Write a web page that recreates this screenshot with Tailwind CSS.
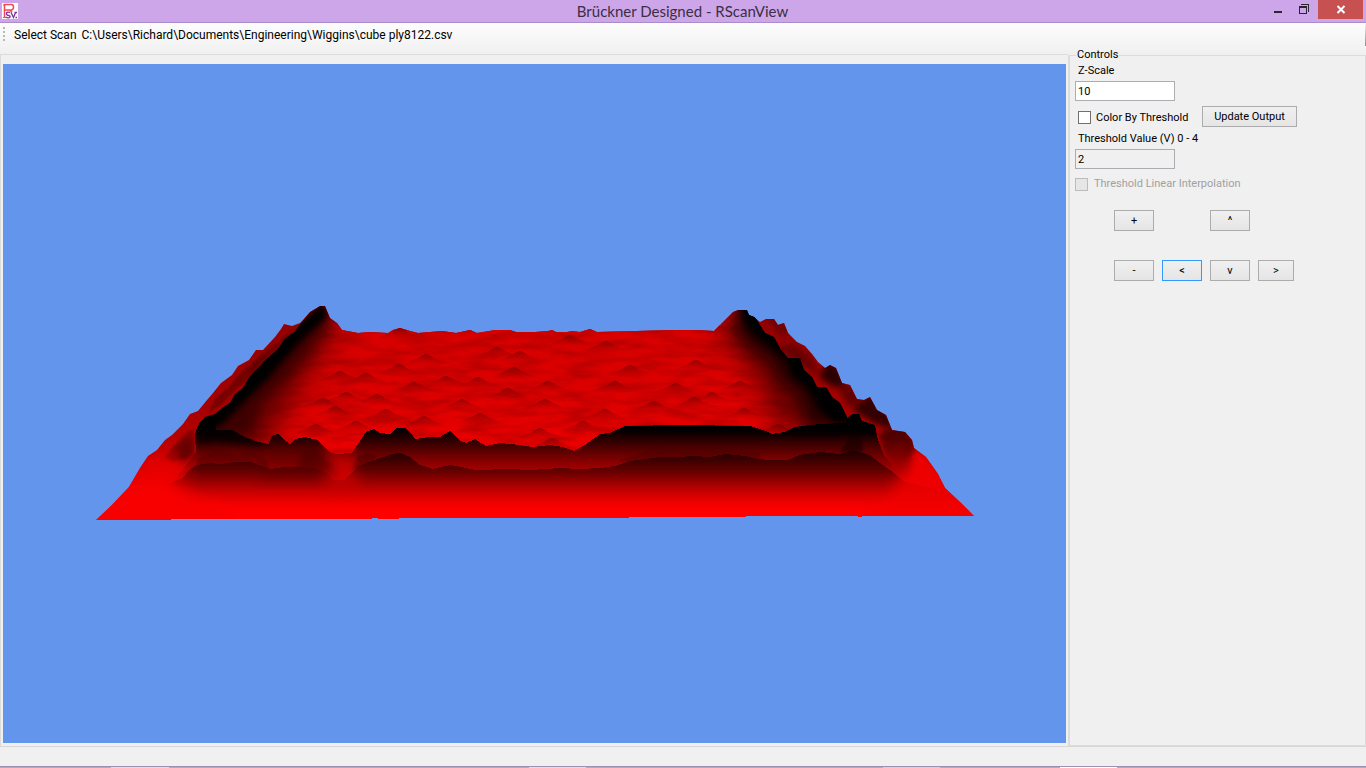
<!DOCTYPE html>
<html lang="en">
<head>
<meta charset="utf-8">
<meta name="viewport" content="width=device-width, initial-scale=1">
<title>Brückner Designed - RScanView</title>
<script src="https://cdn.jsdelivr.net/npm/@tailwindcss/browser@4"></script>
</head>
<body class="flex h-screen flex-col overflow-hidden bg-[#f0f0f0] font-[Roboto,sans-serif] text-[11px] leading-[14px] text-black">

<header class="flex h-[23px] shrink-0 items-start border-b border-[#ab8ccb] bg-[#cda6ea]">
  <div class="flex flex-1 pt-[3px] pl-0.5">
    <svg class="size-4" viewBox="0 0 16 16" aria-hidden="true">
      <rect width="16" height="16" fill="#fff"/>
      <path d="M2.500 15V1.500H9.500Q11.500 1.500 11.500 4T9.500 7H3M8 7L10 9.500" fill="none" stroke="#f04a50" stroke-width="1.500"/>
      <path d="M1 2H3M1 14.500H4" stroke="#f04a50"/>
      <path d="M8 9.500Q4.500 8.500 4.500 10.500T7 12.500Q9 13.500 7.500 14.500T4 14" fill="none" stroke="#8a35a8" stroke-width="1.400"/>
      <path d="M9 9.500L11.500 14.500L13.500 9.500M12.500 9.500H15M13.500 14.500H15" fill="none" stroke="#7c2c98" stroke-width="1.300"/>
    </svg>
  </div>
  <h1 class="font-[Lato,sans-serif] text-[15px] leading-[23px] text-[#3a2f42]">Brückner Designed - RScanView</h1>
  <div class="flex flex-1 justify-end pr-[3px]">
    <button class="flex h-[19px] w-[26px] justify-center" aria-label="Minimize"><svg class="h-[19px] w-[26px]" viewBox="0 0 26 19"><path d="M8 11H16V13H8Z" fill="#2a2530"/></svg></button>
    <button class="h-[19px] w-[26px]" aria-label="Restore"><svg class="h-[19px] w-[26px]" viewBox="0 0 26 19" shape-rendering="crispEdges"><path d="M7 6H15V14H7ZM8 8V13H14V8ZM9 4H17V12H16V5H9Z" fill="#2a2530" fill-rule="evenodd"/></svg></button>
    <button class="h-[19px] w-[45px] bg-[#c75050]" aria-label="Close"><svg class="h-[19px] w-[45px]" viewBox="0 0 45 19"><path d="M19.500 6L26.500 13M26.500 6L19.500 13" stroke="#fff" stroke-width="2"/></svg></button>
  </div>
</header>

<nav class="flex h-[31px] shrink-0 items-start bg-linear-to-b from-[#fdfdfd] to-[#f0f0f0] pl-[3px] text-xs">
  <svg class="mt-1 h-[15px] w-[3px]" viewBox="0 0 3 15" aria-hidden="true"><path d="M0 0h2v2h-2zM0 4h2v2h-2zM0 8h2v2h-2zM0 12h2v2h-2z" fill="#b8b8b8"/></svg>
  <button class="ml-2 h-6 leading-6">Select Scan</button>
  <span class="ml-[5px] leading-6">C:\Users\Richard\Documents\Engineering\Wiggins\cube ply8122.csv</span>
  <span class="ml-auto h-[23px] w-px bg-linear-to-b from-[#f4f4f4] to-[#8c8c8c]"></span>
</nav>

<main class="flex min-h-0 flex-1">
  <section class="min-w-0 flex-1 border-t border-l border-[#dcdcdc] pt-[9px] pr-0.5 pb-[3px] pl-0.5">
    <svg class="block h-full w-full bg-[#6495ed]" viewBox="3 64 1063 679" role="img" aria-label="3D surface plot of the scan">
      <defs>
        <linearGradient id="outer" gradientUnits="userSpaceOnUse" x1="0" y1="306" x2="0" y2="500">
          <stop offset="0" stop-color="#900000"/><stop offset=".55" stop-color="#a80000"/><stop offset=".8" stop-color="#c80000"/><stop offset="1" stop-color="#f00"/>
        </linearGradient>
        <linearGradient id="floor" gradientUnits="userSpaceOnUse" x1="0" y1="330" x2="0" y2="450">
          <stop offset="0" stop-color="#d80000"/><stop offset=".5" stop-color="#dc0000"/><stop offset="1" stop-color="#ec0000"/>
        </linearGradient>
        <linearGradient id="rear" gradientUnits="userSpaceOnUse" x1="0" y1="428" x2="0" y2="480">
          <stop offset="0" stop-color="#000"/><stop offset=".25" stop-color="#300000"/><stop offset=".65" stop-color="#880000"/><stop offset="1" stop-color="#c80000"/>
        </linearGradient>
        <linearGradient id="front" gradientUnits="userSpaceOnUse" x1="0" y1="452" x2="0" y2="512">
          <stop offset="0" stop-color="#200000"/><stop offset=".3" stop-color="#600000"/><stop offset=".5" stop-color="#980000"/><stop offset=".68" stop-color="#cc0000"/><stop offset=".88" stop-color="#f40000"/><stop offset="1" stop-color="#f00"/>
        </linearGradient>
        <linearGradient id="bumpFill" x1="0" y1="0" x2="0" y2="1">
          <stop offset="0" stop-color="#700000" stop-opacity=".6"/><stop offset="1" stop-color="#a00" stop-opacity="0"/>
        </linearGradient>
        <linearGradient id="fadeIn" gradientUnits="userSpaceOnUse" x1="160" y1="0" x2="200" y2="0">
          <stop offset="0" stop-color="#000"/><stop offset="1" stop-color="#fff"/>
        </linearGradient>
        <mask id="leftFade" maskUnits="userSpaceOnUse" x="90" y="400" width="900" height="130"><path d="M90 400H990V530H90Z" fill="url(#fadeIn)"/></mask>
        <filter id="b1" x="-30%" y="-30%" width="160%" height="160%"><feGaussianBlur stdDeviation="1"/></filter>
        <filter id="b2" x="-30%" y="-30%" width="160%" height="160%"><feGaussianBlur stdDeviation="3"/></filter>
        <filter id="b6" x="-30%" y="-30%" width="160%" height="160%"><feGaussianBlur stdDeviation="7"/></filter>
        <filter id="b12" x="-40%" y="-40%" width="180%" height="180%"><feGaussianBlur stdDeviation="13"/></filter>
        <filter id="grain" x="0" y="0" width="100%" height="100%">
          <feTurbulence type="fractalNoise" baseFrequency=".03 .12" numOctaves="3" seed="7"/>
          <feColorMatrix values="0 0 0 0 .35  0 0 0 0 0  0 0 0 0 0  1.300 0 0 0 -.45"/>
        </filter>
        <clipPath id="all"><path d="M96 520L112 505L129 487L140 468L148 456L157 450L165 440L172 435L183 424L190 414L198 411L207 400L213 393L221 383L232 375L238 366L249 360L256 350L263 350L275 337L281 329L284 324L292 326L300 323L303 320L310 312L320 306H325L330 318L337 323L342 330L358 333L370 332L388 333L393 330L400 328L410 331L418 333L442 331L456 333L470 330L477 333L495 330H510L516 332L535 332L548 331L552 330L556 332H567L572 331L580 332L590 329L597 332L636 331L674 330H696L714 331L720 325L733 312L738 310H747L749 315L754 317L760 322L766 319H774L778 325L784 323L788 333L797 342L805 346L812 354L818 362L825 368L830 365L836 368L842 383L850 385L857 399L864 400L870 397L877 410L886 415L892 430L905 432L912 440L914 448L926 457L938 474L945 488L960 502L974 516H862V517H858V516H746V517H629V518H399V519H378V518H372V519H171V520Z"/></clipPath>
        <clipPath id="plateau"><path d="M342 325L337 323L330 318L325 306L320 306L310 312L305 318L300 324L294 332L285 338L277 350L265 360L258 368L250 376L243 388L235 394L230 403L222 408L215 414L205 417L198 427L196 470H860L850 423L846 415L840 403L832 397L826 387H817L812 377L804 370L800 358H788L781 350L774 337L765 333L760 325L754 316L749 315L747 310H738L733 312L720 325H342Z"/></clipPath>
        <path id="rearShape" d="M170 486L182 470L190 460L196 452L195 436L196 430L200 422L208 417L217 416L216 430H232L245 437L258 442L269 444L270 440L273 435L279 434L284 440L290 444L296 439L305 437L318 440L328 451L335 454L352 453L360 441L366 432L374 429L380 433L390 434L397 428H405L411 433L415 439L430 437H440L450 431L460 441L466 443L475 439L486 446L500 443L520 445L532 447L550 445L563 447L574 451L585 445L600 434L610 433L625 426L680 425L750 426L768 432L772 434L785 432L795 427L820 424L846 423L849 416L853 414H859L862 421L875 425L878 440L884 455L892 465L898 486Z"/>
        <clipPath id="rearClip"><use href="#rearShape"/></clipPath>
        <path id="bump" d="M-22 7Q-14 3 -8 1Q-3 -3 0 -3T8 1Q14 3 22 7Q0 12 -22 7Z" fill="url(#bumpFill)"/>
      </defs>

      <g clip-path="url(#all)" shape-rendering="crispEdges">
        <path d="M90 300H980V525H90Z" fill="url(#outer)"/>

        <!-- Outer slopes -->
        <g filter="url(#b1)">
          <path d="M292 330L298 327L287 337L276 352L262 361L253 372L248 372L258 357L276 343Z" fill="#600000" opacity=".6"/>
          <path d="M255 360L272 350L262 363L248 380L234 391L222 404L208 413L216 398L230 386L240 373Z" fill="#580000" opacity=".6"/>
          <path d="M186 433L194 428V453L186 458L172 462L165 458L173 446Z" fill="#700000" opacity=".6"/>
        </g>
        <path d="M177 446L187 436L194 440V458L180 464Z" fill="#500000" opacity=".6" filter="url(#b2)"/>
        <path d="M96 520L148 456L172 460L190 480L210 520Z" fill="#e80000" opacity=".9" filter="url(#b6)"/>
        <g filter="url(#b2)">
          <path d="M764 316H778L790 329L785 340Z" fill="#700000"/>
          <path d="M776 349L792 342L812 357L820 376L804 367Z" fill="#680000"/>
          <path d="M819 377L826 363H834L842 373L846 390L832 386Z" fill="#2c0000"/>
          <path d="M838 387L853 384L861 402L848 407Z" fill="#600000"/>
          <path d="M852 409L864 399L872 394L882 409L892 417L893 430L875 424Z" fill="#300000"/>
        </g>
        <path d="M878 434L893 424L909 428L916 446L912 456L898 462L886 456Z" fill="#500000" filter="url(#b2)"/>
        <path d="M878 450L908 444L914 460L908 478L890 480Z" fill="#900000" opacity=".8" filter="url(#b6)"/>
        <path d="M914 450L928 457L947 488L976 516L920 520L912 480Z" fill="#e80000" filter="url(#b2)"/>

        <!-- Scan bed between the side ridges -->
        <g clip-path="url(#plateau)">
          <path d="M190 300H865V475H190Z" fill="url(#floor)"/>
          <path d="M250 326H820V455H250Z" filter="url(#grain)"/>
          <g>
            <use href="#bump" x="400" y="331"/><use href="#bump" x="497" y="350"/><use href="#bump" x="520" y="354"/><use href="#bump" x="606" y="344"/>
            <use href="#bump" x="426" y="357"/><use href="#bump" x="399" y="367"/><use href="#bump" x="340" y="374"/><use href="#bump" x="366" y="376"/>
            <use href="#bump" x="514" y="370"/><use href="#bump" x="446" y="379"/><use href="#bump" x="478" y="380"/><use href="#bump" x="414" y="385"/>
            <use href="#bump" x="548" y="384"/><use href="#bump" x="615" y="384"/><use href="#bump" x="676" y="386"/><use href="#bump" x="696" y="363"/>
            <use href="#bump" x="508" y="391"/><use href="#bump" x="346" y="395"/><use href="#bump" x="377" y="397"/><use href="#bump" x="462" y="402"/>
            <use href="#bump" x="545" y="402"/><use href="#bump" x="654" y="404"/><use href="#bump" x="605" y="412"/><use href="#bump" x="323" y="401"/>
            <use href="#bump" x="480" y="416"/><use href="#bump" x="424" y="419"/><use href="#bump" x="583" y="424"/><use href="#bump" x="540" y="431"/>
            <use href="#bump" x="552" y="441"/><use href="#bump" x="335" y="409"/><use href="#bump" x="386" y="412"/><use href="#bump" x="712" y="395"/>
            <use href="#bump" x="744" y="411"/><use href="#bump" x="694" y="400"/><use href="#bump" x="740" y="384"/><use href="#bump" x="778" y="427"/>
            <use href="#bump" x="316" y="427"/><use href="#bump" x="356" y="424"/><use href="#bump" x="630" y="368"/><use href="#bump" x="570" y="338"/>
          </g>
          <path d="M326 304L340 326L322 356L302 386L288 412L270 450H190V425Z" fill="#500000" opacity=".7" filter="url(#b12)"/>
          <path d="M325 302L333 322L310 352L288 378L262 406L250 440H190V425Z" fill="#200000" opacity=".7" filter="url(#b6)"/>
          <path d="M325 300L328 316L300 342L272 374L249 397L222 425L190 435L205 405Z" fill="#000" filter="url(#b2)"/>
          <path d="M739 300L718 332L740 356L762 385L776 430H870V400L760 300Z" fill="#400000" opacity=".75" filter="url(#b12)"/>
          <path d="M738 300L736 331L749 347L769 360L779 378L799 396L808 430H865V405L795 345L758 300Z" fill="#100000" opacity=".75" filter="url(#b6)"/>
          <path d="M738 305L744 322L755 335L768 345L788 362L793 377L807 387L820 410L835 423H866L850 390L800 340L758 300Z" fill="#000" filter="url(#b2)"/>
        </g>

        <!-- Rear crest of the near wall -->
        <g mask="url(#leftFade)"><use href="#rearShape" fill="url(#rear)"/></g>
        <g clip-path="url(#rearClip)">
          <path d="M324 450L352 450L358 470L340 486L320 486Z" fill="#d00000" opacity=".6" filter="url(#b6)"/>
          <path d="M196 412H225L232 430L250 437L270 442L262 446L215 441L198 444Z" fill="#000" opacity=".7" filter="url(#b2)"/>
          <path d="M625 422H750L772 430L795 423L858 414L877 424V435L800 436L750 433H620Z" fill="#000" opacity=".7" filter="url(#b2)"/>
          <path d="M840 452L851 436H861L863 452Z" fill="#180000" opacity=".6" filter="url(#b1)"/>
          <path d="M197 460L207 454L218 449L229 454L240 455L247 450L262 456L268 462V472H197Z" fill="#500000" opacity=".45" filter="url(#b1)"/>
          <path d="M298 466L303 451L318 450L330 463L340 478H298Z" fill="#300000" opacity=".45" filter="url(#b2)"/>
          <path d="M352 470L358 456L366 453L378 456L366 466Z" fill="#400000" opacity=".5" filter="url(#b1)"/>
          <path d="M620 460L640 453L658 448L666 449L690 450L720 449L760 452V462H620Z" fill="#400000" opacity=".35" filter="url(#b1)"/>
        </g>

        <!-- Front crest and the base sheet -->
        <g mask="url(#leftFade)">
          <path d="M150 520V490L183 478L190 469L197 465L210 463L220 464L235 462H250L262 466L270 469L284 467L298 467L312 468L325 472L334 480L345 480L350 474L357 467L367 463L380 458L392 454L400 453L410 457L420 465L432 469L450 465L462 467L475 470L510 469L530 470L560 468L580 469L600 468L615 466L630 461L660 457L680 457L692 456L710 457L725 454L745 456L757 459L770 460L788 460L800 455L820 452L840 454L853 450L870 455L880 463L890 470L905 482L945 492L974 516V521H150Z" fill="url(#front)"/>
        </g>
        <path d="M262 452L318 448L334 464L334 480H262Z" fill="#500000" opacity=".35" filter="url(#b6)"/>
        <path d="M328 468L352 466L362 490H322Z" fill="#d00000" opacity=".7" filter="url(#b6)"/>
        <path d="M90 520L130 484L166 480L182 494L235 512V525H90Z" fill="#f80000" filter="url(#b6)"/>
        <path d="M898 476L925 464L985 520H860L890 500Z" fill="#f00000" opacity=".8" filter="url(#b6)"/>
      </g>
    </svg>
  </section>

  <fieldset class="-mt-1.5 w-[298px] shrink-0 border border-l-2 border-[#dcdcdc] pl-[5px]">
    <legend class="ml-px px-px">Controls</legend>
    <label for="z" class="mt-0.5 ml-[3px] block">Z-Scale</label>
    <input id="z" type="text" value="10" class="mt-[3px] block h-5 w-[100px] border border-[#abadb3] bg-white px-0.5">
    <div class="mt-[5px] flex h-[21px] items-center pl-[3px]">
      <label class="flex w-[124px] items-center gap-[5px] whitespace-nowrap pt-0.5"><input type="checkbox" class="size-[13px] appearance-none border border-[#707070] bg-white">Color By Threshold</label>
      <button class="h-[21px] w-[95px] border border-[#acacac] bg-linear-to-b from-[#f0f0f0] to-[#e5e5e5]">Update Output</button>
    </div>
    <label for="t" class="mt-[5px] ml-[3px] block">Threshold Value (V) 0 - 4</label>
    <input id="t" type="text" value="2" readonly class="mt-[3px] block h-5 w-[100px] border border-[#abadb3] bg-[#f0f0f0] px-0.5">
    <label class="mt-2 flex items-center gap-1.5 text-[#a0a0a0]"><input type="checkbox" disabled class="size-[13px] appearance-none border border-[#bcbcbc] bg-[#e6e6e6]">Threshold Linear Interpolation</label>
    <div class="mt-[19px] ml-[39px] grid grid-cols-[40px_40px_40px_36px] grid-rows-[21px_21px] gap-x-2 gap-y-[29px]">
      <button class="border border-[#acacac] bg-linear-to-b from-[#f0f0f0] to-[#e5e5e5]">+</button>
      <button class="col-start-3 border border-[#acacac] bg-linear-to-b from-[#f0f0f0] to-[#e5e5e5]">^</button>
      <button class="col-start-1 border border-[#acacac] bg-linear-to-b from-[#f0f0f0] to-[#e5e5e5]">-</button>
      <button class="border border-[#3399ff] bg-linear-to-b from-[#f0f0f0] to-[#e5e5e5]">&lt;</button>
      <button class="border border-[#acacac] bg-linear-to-b from-[#f0f0f0] to-[#e5e5e5]">v</button>
      <button class="border border-[#acacac] bg-linear-to-b from-[#f0f0f0] to-[#e5e5e5]">&gt;</button>
    </div>
  </fieldset>
</main>

<footer class="h-5 shrink-0 border-t border-[#d7d7d7]"></footer>
<div class="flex h-0.5 shrink-0 border-t border-[#9f8fac] bg-[#baa4c8]">
  <span class="ml-[111px] h-px w-[58px] bg-[#e4dcea]"></span>
  <span class="ml-[360px] h-px w-[57px] bg-[#e4dcea]"></span>
  <span class="ml-[297px] h-px w-[57px] bg-[#d9cfe2]"></span>
  <span class="ml-[120px] h-px w-[57px] bg-white"></span>
</div>
</body>
</html>
